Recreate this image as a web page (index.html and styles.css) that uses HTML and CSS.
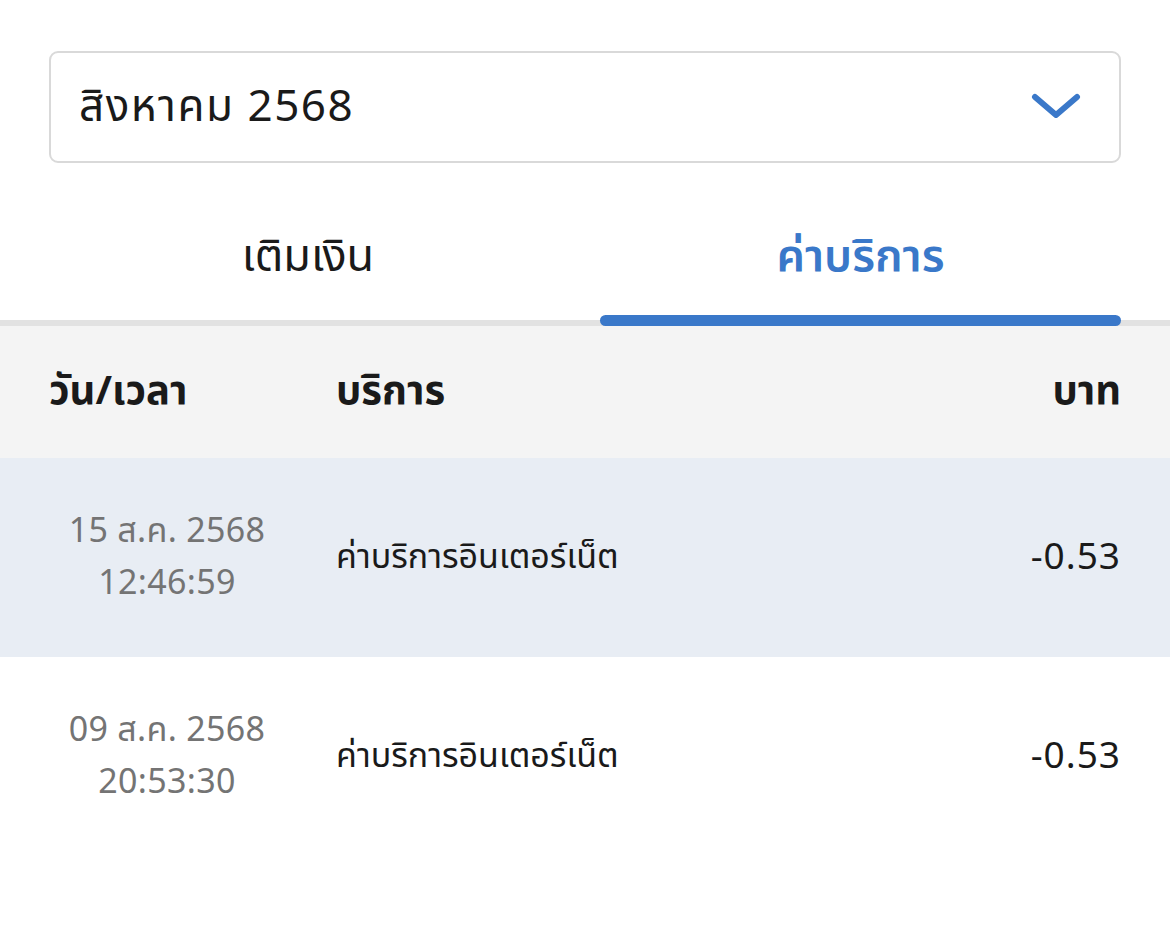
FILE: index.html
```html
<!DOCTYPE html>
<html lang="th">
<head>
<meta charset="utf-8">
<link rel="stylesheet" href="styles.css">
</head>
<body>
<div class="page">
  <div class="select">
    <span class="select-text">สิงหาคม 2568</span>
    <svg class="chev" width="50" height="28" viewBox="0 0 50 28"><path d="M4 4 L25 22 L46 4" fill="none" stroke="#3a78c9" stroke-width="6" stroke-linecap="round" stroke-linejoin="round"/></svg>
  </div>
  <div class="tabs">
    <div class="tab">เติมเงิน</div>
    <div class="tab active">ค่าบริการ</div>
  </div>
  <div class="thead">
    <div class="c-date">วัน/เวลา</div>
    <div class="c-svc">บริการ</div>
    <div class="c-amt">บาท</div>
  </div>
  <div class="row hl">
    <div class="c-date d">15 ส.ค. 2568<br>12:46:59</div>
    <div class="c-svc s">ค่าบริการอินเตอร์เน็ต</div>
    <div class="c-amt a">-0.53</div>
  </div>
  <div class="row">
    <div class="c-date d">09 ส.ค. 2568<br>20:53:30</div>
    <div class="c-svc s">ค่าบริการอินเตอร์เน็ต</div>
    <div class="c-amt a">-0.53</div>
  </div>
</div>
</body>
</html>
```
FILE: styles.css
```css
* { box-sizing: border-box; }
html, body { margin: 0; padding: 0; background: #fff; }
body { font-family: "Noto Sans Thai", "Noto Sans", "DejaVu Sans", sans-serif; color: #1a1a1a; }
.page { width: 1170px; padding-top: 51px; }
.select { margin: 0 49px; height: 112px; border: 2px solid #d9d9d9; border-radius: 9px; display: flex; align-items: center; justify-content: space-between; padding: 0 38px 0 28px; }
.select-text { font-size: 44px; letter-spacing: 1.5px; }
.tabs { margin-top: 37px; display: grid; grid-template-columns: 584px 521px; padding-left: 16px; height: 126px; border-bottom: 6px solid #e2e2e2; }
.tab { display: flex; align-items: center; justify-content: center; font-size: 45px; padding-bottom: 6px; position: relative; }
.tab.active { color: #3a78c9; font-weight: 600; }
.tab.active::after { content: ""; position: absolute; left: 0; right: 0; bottom: -6px; height: 11px; border-radius: 6px; background: #3a78c9; }
.thead, .row { display: grid; grid-template-columns: 287px 1fr 200px; padding: 0 49px; align-items: center; }
.thead { background: #f4f4f4; height: 132px; font-size: 40px; font-weight: 700; }
.row { height: 199px; }
.row.hl { background: #e8edf4; }
.c-amt { text-align: right; }
.d { text-align: center; width: 236px; color: #747474; font-size: 34px; line-height: 52px; letter-spacing: 0.3px; }
.s { font-size: 34px; }
.a { font-size: 37px; letter-spacing: 1px; }
```
